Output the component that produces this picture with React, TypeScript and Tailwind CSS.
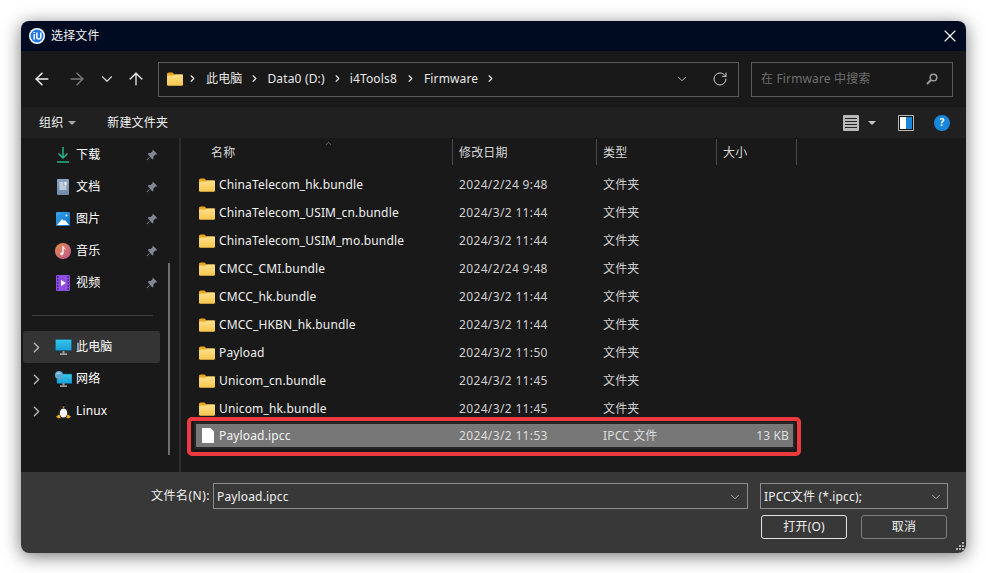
import { ArrowLeft, ArrowRight, ArrowUp, ChevronDown, ChevronRight, RotateCw, X } from "lucide-react";

const sans = "font-['Noto_Sans','Noto_Sans_CJK_SC',sans-serif]";

const files = [
  ["ChinaTelecom_hk.bundle", "2024/2/24 9:48"],
  ["ChinaTelecom_USIM_cn.bundle", "2024/3/2 11:44"],
  ["ChinaTelecom_USIM_mo.bundle", "2024/3/2 11:44"],
  ["CMCC_CMI.bundle", "2024/2/24 9:48"],
  ["CMCC_hk.bundle", "2024/3/2 11:44"],
  ["CMCC_HKBN_hk.bundle", "2024/3/2 11:44"],
  ["Payload", "2024/3/2 11:50"],
  ["Unicom_cn.bundle", "2024/3/2 11:45"],
  ["Unicom_hk.bundle", "2024/3/2 11:45"],
];

function FolderIcon({ w = 16, h = 14 }: { w?: number; h?: number }) {
  return (
    <svg width={w} height={h} viewBox="0 0 16 14" className="shrink-0">
      <defs>
        <linearGradient id="folder" x1="0" y1="0" x2="0" y2="1">
          <stop offset="0" stopColor="#fde08a" />
          <stop offset="1" stopColor="#f8c64e" />
        </linearGradient>
      </defs>
      <path d="M0 2a1.500 1.500 0 0 1 1.500-1.500h4l2 2H16V6H0z" fill="#eaa51c" />
      <path d="M0 4.500a1 1 0 0 1 1-1h5.500l1.500-1h6.800a1.200 1.200 0 0 1 1.200 1.200v8.800a1.200 1.200 0 0 1-1.200 1.200H1.200A1.200 1.200 0 0 1 0 12.500z" fill="url(#folder)" />
    </svg>
  );
}

function PinIcon() {
  return (
    <svg width="12" height="12" viewBox="0 0 12 12" className="shrink-0">
      <path d="M7 .8l4.200 4.200-1 .8-.8-.3-2 2 .1 2-1 1L4 8 1.200 11.200.5 11 .8 10.500 4 7.500 1.700 5l1-1 2 .1 2-2-.3-.8z" fill="#7f8790" />
    </svg>
  );
}

function DownloadIcon() {
  return (
    <svg width="12" height="16" viewBox="0 0 12 16">
      <path d="M6 0v11M1.500 6.500L6 11l4.500-4.500" fill="none" stroke="#1fb58f" strokeWidth="1.500" />
      <path d="M0 15h12" stroke="#1fb58f" strokeWidth="1.500" />
    </svg>
  );
}

function DocIcon() {
  return (
    <svg width="12" height="16" viewBox="0 0 12 16">
      <defs>
        <linearGradient id="doc" x1="0" y1="0" x2="0" y2="1">
          <stop offset="0" stopColor="#8ba6c4" />
          <stop offset="1" stopColor="#6f89a6" />
        </linearGradient>
      </defs>
      <rect width="12" height="16" rx="1" fill="url(#doc)" />
      <path d="M2.500 4h4M2.500 6h4M2.500 8h7M2.500 10h7" stroke="#fff" />
      <rect x="7.500" y="3" width="2" height="3.500" fill="#fff" />
    </svg>
  );
}

function PictureIcon() {
  return (
    <svg width="14" height="14" viewBox="0 0 14 14">
      <defs>
        <linearGradient id="pic" x1="0" y1="0" x2="1" y2="1">
          <stop offset="0" stopColor="#3aa6f0" />
          <stop offset="1" stopColor="#0b6cc4" />
        </linearGradient>
      </defs>
      <rect width="14" height="14" rx="1" fill="url(#pic)" />
      <path d="M1 13l5-6 2 2 1-1 4 5z" fill="#fff" />
      <circle cx="10.500" cy="3.500" r="1" fill="#fff" />
    </svg>
  );
}

function MusicIcon() {
  return (
    <svg width="16" height="16" viewBox="0 0 16 16">
      <defs>
        <linearGradient id="mus" x1="0" y1="0" x2="1" y2="1">
          <stop offset="0" stopColor="#ea8a4f" />
          <stop offset="1" stopColor="#b9578f" />
        </linearGradient>
      </defs>
      <circle cx="8" cy="8" r="8" fill="url(#mus)" />
      <path d="M8 3.500v7" stroke="#fff" strokeWidth="1.300" />
      <path d="M8 3.500c.5 1.500 2 1.500 2.500 3" fill="none" stroke="#fff" />
      <circle cx="6.700" cy="10.700" r="1.500" fill="#fff" />
    </svg>
  );
}

function VideoIcon() {
  return (
    <svg width="14" height="16" viewBox="0 0 14 16">
      <rect width="14" height="16" rx="1" fill="#8e4fe0" />
      <path d="M1 2h1.500M1 5h1.500M1 8h1.500M1 11h1.500M1 14h1.500M11.500 2H13M11.500 5H13M11.500 8H13M11.500 11H13M11.500 14H13" stroke="#3c1d70" strokeWidth="1.400" />
      <path d="M5 5l5 3-5 3z" fill="#fff" />
    </svg>
  );
}

function PcIcon({ globe }: { globe?: boolean }) {
  return (
    <svg width="17" height="16" viewBox="0 0 17 16">
      <defs>
        <linearGradient id="pc" x1="0" y1="0" x2="0" y2="1">
          <stop offset="0" stopColor="#37c6e8" />
          <stop offset="1" stopColor="#1a9fd8" />
        </linearGradient>
      </defs>
      <rect x={globe ? 2 : 0.500} y={globe ? 3 : 0.500} width={globe ? 15 : 16} height={globe ? 9.500 : 11} rx="0.500" fill="url(#pc)" stroke="#115e88" strokeWidth="0.500" />
      <rect x="7.500" y="12" width="2" height="2.500" fill="#8d99a3" />
      <rect x="5" y="14.500" width="7" height="1.200" fill="#c6ced5" />
      {globe && <circle cx="4" cy="4" r="4" fill="#5da6cf" />}
      {globe && <path d="M1.500 3c1.500-1 3-1 4-.5" stroke="#cfe6f4" fill="none" />}
    </svg>
  );
}

function PenguinIcon() {
  return (
    <svg width="15" height="16" viewBox="0 0 15 16">
      <path d="M7.500 0C5.500 0 5 1.500 5 3.500 5 5.500 2 8 2 11c0 2 2.500 4 5.500 4s5.500-2 5.500-4c0-3-3-5.500-3-7.500C10 1.500 9.500 0 7.500 0z" fill="#0c0c0c" stroke="#4a4a4a" strokeWidth="0.400" />
      <ellipse cx="7.500" cy="10" rx="3.800" ry="4.600" fill="#f4f4f4" />
      <path d="M6 3.600h3L7.500 5.200z" fill="#e9ac1d" />
      <path d="M0 13.500l3.500-2.200 1.200 3.900H2zM15 13.500l-3.500-2.200-1.200 3.900H13z" fill="#e9ac1d" />
    </svg>
  );
}

function SideItem({ icon, label, pin, arrow, active }: { icon: React.ReactNode; label: string; pin?: boolean; arrow?: boolean; active?: boolean }) {
  return (
    <div className={`mx-[2px] flex h-8 w-[137px] items-center rounded-[3px] ${active ? "bg-[#343434]" : ""}`}>
      <div className="flex w-[11px] shrink-0 justify-end">
        {arrow && <ChevronRight size={17} strokeWidth={2} className="relative -right-[11px] shrink-0 text-[#b5b5b5]" />}
      </div>
      <div className="ml-[18px] flex w-[22px] shrink-0 justify-center">{icon}</div>
      <span className="ml-[2px] text-[12px] text-white">{label}</span>
      {pin && <div className="ml-auto mr-[2px]"><PinIcon /></div>}
    </div>
  );
}

function FileRow({ name, date }: { name: string; date: string }) {
  return (
    <div className="flex h-7 items-center text-[12px]">
      <div className="flex w-[264px] items-center gap-[4px] pl-[4px] text-[#f0f0f0]">
        <FolderIcon />
        <span>{name}</span>
      </div>
      <span className="w-[144px] tracking-[0.35px] text-[#d0d0d0]">{date}</span>
      <span className="text-[#d0d0d0]">文件夹</span>
    </div>
  );
}

export default function App() {
  return (
    <div className={`h-[573px] w-[986px] overflow-hidden bg-white pl-[21px] pt-[21px] tracking-[0.15px] ${sans}`}>
      <div className="flex h-[532px] w-[945px] flex-col overflow-hidden rounded-[8px] shadow-[0_3px_18px_rgba(0,0,0,0.55)]">
        {/* Title bar */}
        <div className="flex h-[30px] shrink-0 items-center bg-[#000b22] pl-[8px] pr-[6px]">
          <svg width="16" height="16" viewBox="0 0 16 16">
            <circle cx="8" cy="8" r="8" fill="#fff" />
            <circle cx="8" cy="8" r="6.500" fill="#1f78e6" />
            <path d="M5.200 6v5.500M5.200 4v1M7.800 4.500v4.500a2 2 0 0 0 4 0V4.500" fill="none" stroke="#fff" strokeWidth="1.500" />
          </svg>
          <span className="ml-[6px] text-[12px] text-[#f2f2f2]">选择文件</span>
          <X size={20} strokeWidth={1.300} className="ml-auto text-white" />
        </div>

        {/* Address row */}
        <div className="flex h-[56px] shrink-0 items-center bg-[#191919] pl-[11px] pr-[13px]">
          <ArrowLeft size={20} strokeWidth={1.800} className="text-[#f0f0f0]" />
          <ArrowRight size={20} strokeWidth={1.800} className="ml-[15px] text-[#7a7a7a]" />
          <ChevronDown size={18} strokeWidth={1.500} className="ml-[11px] text-[#d8d8d8]" />
          <ArrowUp size={20} strokeWidth={1.600} className="ml-[10px] text-[#e8e8e8]" />
          <div className="ml-[12px] flex h-[35px] w-[581px] items-center border border-[#5a5a5a] pb-[1px] pl-[8px] pr-[10px] text-[12px] text-[#e8e8e8]">
            <FolderIcon />
            <ChevronRight size={11} strokeWidth={2.500} className="ml-[4px]" />
            <span className="ml-[8px]">此电脑</span>
            <ChevronRight size={11} strokeWidth={2.500} className="ml-[7px]" />
            <span className="ml-[7px]">Data0 (D:)</span>
            <ChevronRight size={11} strokeWidth={2.500} className="ml-[7px]" />
            <span className="ml-[7px]">i4Tools8</span>
            <ChevronRight size={11} strokeWidth={2.500} className="ml-[8px]" />
            <span className="ml-[8px]">Firmware</span>
            <ChevronRight size={11} strokeWidth={2.500} className="ml-[7px]" />
            <ChevronDown size={14} strokeWidth={1.500} className="ml-auto text-[#d0d0d0]" />
            <RotateCw size={16} strokeWidth={1.500} className="ml-[23px] text-[#d0d0d0]" />
          </div>
          <div className="ml-[12px] flex h-[35px] w-[202px] items-center border border-[#5a5a5a] pl-[9px] pr-[14px] text-[12px] text-[#6f6f6f]">
            <span>在 Firmware 中搜索</span>
            <svg width="12" height="12" viewBox="0 0 12 12" className="ml-auto">
              <circle cx="7.500" cy="4.500" r="3.300" fill="none" stroke="#9a9a9a" strokeWidth="1.500" />
              <path d="M5 7l-4 4" stroke="#9a9a9a" strokeWidth="2" />
            </svg>
          </div>
        </div>

        {/* Command bar */}
        <div className="flex h-[31px] shrink-0 items-center bg-[#202020] pl-[18px] pr-[16px] text-[12px] text-[#f0f0f0]">
          <span>组织</span>
          <span className="ml-[5px] h-0 w-0 border-x-[4px] border-t-[4px] border-x-transparent border-t-[#a8a8a8]" />
          <span className="ml-[31px]">新建文件夹</span>
          <svg width="16" height="16" viewBox="0 0 16 16" className="ml-auto">
            <rect width="16" height="16" rx="1" fill="#b8b8b8" />
            <path d="M2 3.500h12M2 6.500h12M2 9.500h12M2 12.500h12" stroke="#222" />
          </svg>
          <span className="ml-[9px] h-0 w-0 border-x-[4px] border-t-[4px] border-x-transparent border-t-[#c4c4c4]" />
          <svg width="16" height="16" viewBox="0 0 16 16" className="ml-[22px]">
            <rect width="16" height="16" rx="1" fill="#b8b8b8" />
            <rect x="1" y="1" width="14" height="14" fill="#111" />
            <rect x="2" y="2" width="6" height="12" fill="#fff" />
            <rect x="8" y="2" width="6" height="12" fill="#1b87d8" />
          </svg>
          <span className="ml-[20px] flex h-4 w-4 items-center justify-center rounded-full bg-[#1787dc] text-[10px] font-bold text-white">?</span>
        </div>

        {/* Body */}
        <div className="flex h-[334px] shrink-0 bg-[#191919]">
          {/* Sidebar */}
          <div className="relative w-[158px] shrink-0 pt-[1px]">
            <SideItem icon={<DownloadIcon />} label="下载" pin />
            <SideItem icon={<DocIcon />} label="文档" pin />
            <SideItem icon={<PictureIcon />} label="图片" pin />
            <SideItem icon={<MusicIcon />} label="音乐" pin />
            <SideItem icon={<VideoIcon />} label="视频" pin />
            <div className="ml-[11px] mt-[16px] h-px w-[121px] bg-[#3d3d3d]" />
            <div className="mt-[15px]">
              <SideItem icon={<PcIcon />} label="此电脑" arrow active />
              <SideItem icon={<PcIcon globe />} label="网络" arrow />
              <SideItem icon={<PenguinIcon />} label="Linux" arrow />
            </div>
            <div className="absolute right-[9px] top-[125px] h-[192px] w-[2px] bg-[#6f6f6f]" />
          </div>
          <div className="h-full w-[2px] shrink-0 bg-[#2c2c2c]" />

          {/* File list */}
          <div className="relative flex-1 pl-[14px]">
            <div className="flex h-[33px] items-start pt-[1px] text-[12px] text-[#d8d8d8]">
              <div className="relative flex h-[26px] w-[258px] items-center border-r border-[#4a4a4a] pl-[16px] pt-[2px]">
                名称
                <ChevronDown size={9} strokeWidth={1.500} className="absolute left-[129px] top-0 rotate-180 text-[#a0a0a0]" />
              </div>
              <div className="flex h-[26px] w-[144px] items-center border-r border-[#4a4a4a] pl-[6px] pt-[2px]">修改日期</div>
              <div className="flex h-[26px] w-[120px] items-center border-r border-[#4a4a4a] pl-[6px] pt-[2px]">类型</div>
              <div className="flex h-[26px] w-[80px] items-center border-r border-[#4a4a4a] pl-[6px] pt-[2px]">大小</div>
            </div>
            {files.map(([name, date]) => (
              <FileRow key={name} name={name} date={date} />
            ))}
            <div className="ml-[1px] mt-[1px] flex h-[23px] w-[597px] items-center bg-[#777777] text-[12px] shadow-[0_0_0_2px_#262626]">
              <svg width="12" height="15" viewBox="0 0 12 15" className="ml-[6px] shrink-0">
                <path d="M0 0h8.500L12 3.500V15H0z" fill="#fff" />
              </svg>
              <span className="ml-[5px] w-[240px] text-[#f4f4f4]">Payload.ipcc</span>
              <span className="w-[144px] tracking-[0.35px] text-[#dedede]">2024/3/2 11:53</span>
              <span className="text-[#dedede]">IPCC 文件</span>
              <span className="ml-auto pr-[4px] text-[#dedede]">13 KB</span>
            </div>
            {/* Red callout around the selected row */}
            <div className="absolute left-[6px] top-[279px] h-[39px] w-[614px] rounded-[5px] border-[4px] border-[#ee3a3f]" />
          </div>
        </div>

        {/* Footer */}
        <div className="relative flex-1 bg-[#383838] pr-[18px] pt-[11px] text-[12px] text-[#f0f0f0]">
          <div className="flex items-center justify-end">
            <span className="mr-[3px] tracking-[0.5px]">文件名(N):</span>
            <div className="flex h-[26px] w-[535px] items-center border border-[#8d8d8d] pl-[3px] pr-[5px] pt-[1px]">
              <span>Payload.ipcc</span>
              <ChevronDown size={14} strokeWidth={1.500} className="ml-auto text-[#b8b8b8]" />
            </div>
            <div className="ml-[12px] flex h-[26px] w-[188px] items-center border border-[#8d8d8d] pl-[3px] pr-[4px] pt-[1px]">
              <span>IPCC文件 (*.ipcc);</span>
              <ChevronDown size={14} strokeWidth={1.500} className="ml-auto text-[#b8b8b8]" />
            </div>
          </div>
          <div className="mt-[6px] flex justify-end gap-[14px] pr-[1px]">
            <div className="flex h-[24px] w-[86px] items-center justify-center rounded-[3px] border border-[#e4e4e4]">打开(O)</div>
            <div className="flex h-[24px] w-[86px] items-center justify-center rounded-[3px] border border-[#7d7d7d]">取消</div>
          </div>
          <svg width="9" height="9" viewBox="0 0 9 9" className="absolute bottom-[2px] right-[2px]">
            <path d="M7 0h2v2H7zM4 3h2v2H4zM7 3h2v2H7zM1 6h2v2H1zM4 6h2v2H4zM7 6h2v2H7z" fill="#b0b0b0" />
          </svg>
        </div>
      </div>
    </div>
  );
}
